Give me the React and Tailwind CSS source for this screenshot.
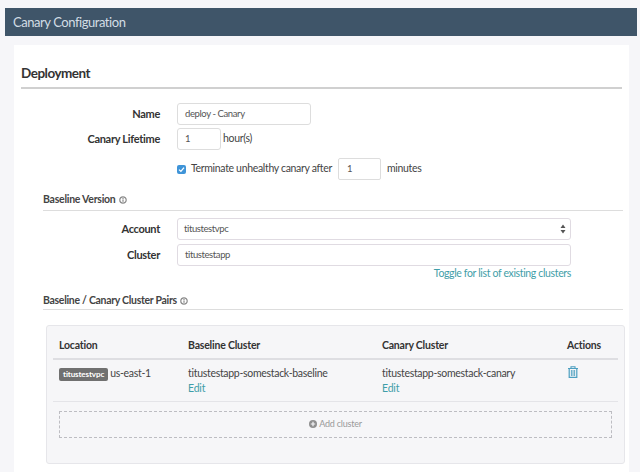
import React from "react";

const font = { fontFamily: '"Lato", "Noto Sans", sans-serif' };

function Label({ children }) {
  return <div className="w-[139px] shrink-0 text-right text-[11px] font-bold tracking-[-0.3px] text-[#333]">{children}</div>;
}

function Info() {
  return (
    <svg width="8" height="8" viewBox="0 0 8 8" className="ml-[3px] inline-block">
      <circle cx="4" cy="4" r="3.2" fill="none" stroke="#8a8a8a" strokeWidth="1.2" />
      <rect x="3.4" y="3.4" width="1.2" height="2.4" fill="#8a8a8a" />
      <rect x="3.4" y="2" width="1.2" height="1" fill="#8a8a8a" />
    </svg>
  );
}

function Edit() {
  return <div className="text-[10.5px] leading-[14px] tracking-[-0.2px] text-[#3f9ea8]">Edit</div>;
}

export default function App() {
  return (
    <div className="h-[475px] w-[640px] overflow-hidden bg-white" style={font}>
      <div className="h-[472px] bg-[#f6f6f9] pt-[8px]">
        <div className="ml-[5px] flex h-[28px] w-[632px] items-center bg-[#3f5569] pl-[8px] pt-[1px] text-[13px] tracking-[-0.45px] text-[#d3dde5]">
          Canary Configuration
        </div>
        <div className="ml-[14px] mt-[9px] h-[427px] w-[615px] bg-white pl-[7px] pt-[20px]">
          <div className="w-[601px] border-b-2 border-[#d0d0d0] pb-[5px] text-[13.5px] font-bold leading-[17px] tracking-[-0.5px] text-[#333]">
            Deployment
          </div>

          <div className="mt-[14px] flex items-center">
            <Label>Name</Label>
            <div className="ml-[17px] flex h-[22px] w-[134px] items-center rounded-[3px] border border-[#ddd] pl-[7px] text-[9.5px] tracking-[-0.4px] text-[#555]">
              deploy - Canary
            </div>
          </div>
          <div className="mt-[3px] flex items-center">
            <Label>Canary Lifetime</Label>
            <div className="ml-[17px] flex h-[22px] w-[44px] items-center rounded-[3px] border border-[#ddd] pl-[7px] text-[9.5px] text-[#555]">
              1
            </div>
            <span className="ml-[2px] text-[10.5px] tracking-[-0.3px] text-[#444]">hour(s)</span>
          </div>

          <div className="ml-[156px] mt-[8px] flex items-center">
            <div className="flex h-[9px] w-[9px] items-center justify-center rounded-[2px] bg-[#3f94d8]">
              <svg width="7" height="7" viewBox="0 0 7 7">
                <path d="M1 3.6 L2.9 5.4 L6 1.6" fill="none" stroke="#fff" strokeWidth="1.3" />
              </svg>
            </div>
            <span className="ml-[5px] text-[10.5px] tracking-[-0.33px] text-[#444]">Terminate unhealthy canary after</span>
            <div className="ml-[6px] flex h-[22px] w-[43px] items-center rounded-[2px] border border-[#ddd] pl-[8px] text-[9.5px] text-[#555]">
              1
            </div>
            <span className="ml-[6px] text-[10.5px] tracking-[-0.3px] text-[#444]">minutes</span>
          </div>

          <div className="ml-[22px] mt-[13px] flex h-[18px] w-[580px] items-center border-b border-[#ddd] pb-[3px] text-[10.5px] font-bold tracking-[-0.25px] text-[#444]">
            Baseline Version
            <Info />
          </div>

          <div className="mt-[7px] flex items-center">
            <Label>Account</Label>
            <div className="ml-[17px] flex h-[22px] w-[394px] items-center justify-between rounded-[3px] border border-[#e0dbe2] pl-[6px] pr-[4px] text-[9.5px] tracking-[-0.4px] text-[#555]">
              titustestvpc
              <svg width="6" height="10" viewBox="0 0 6 10">
                <path d="M3 0.5 L5.5 4 L0.5 4 Z M3 9.5 L5.5 6 L0.5 6 Z" fill="#555" />
              </svg>
            </div>
          </div>
          <div className="mt-[4px] flex items-center">
            <Label>Cluster</Label>
            <div className="ml-[17px] flex h-[22px] w-[394px] items-center rounded-[3px] border border-[#e0dbe2] pl-[7px] text-[9.5px] tracking-[-0.4px] text-[#555]">
              titustestapp
            </div>
          </div>
          <div className="w-[550px] text-right text-[10.5px] leading-[14px] tracking-[-0.35px] text-[#3f9ea8]">
            Toggle for list of existing clusters
          </div>

          <div className="ml-[22px] mt-[13px] flex h-[17px] w-[580px] items-center border-b border-[#ddd] pb-[1px] text-[10.5px] font-bold tracking-[-0.3px] text-[#444]">
            Baseline / Canary Cluster Pairs
            <Info />
          </div>

          <div className="ml-[25px] mt-[15px] h-[139px] w-[579px] rounded-[3px] border border-[#e6e6ea] bg-[#f6f6f8] px-[6px] pt-[12px]">
            <div className="flex h-[22px] border-b-2 border-[#dedee2] text-[10.5px] font-bold leading-[14px] tracking-[-0.2px] text-[#333]">
              <div className="w-[135px] pl-[6px]">Location</div>
              <div className="w-[194px]">Baseline Cluster</div>
              <div className="w-[185px]">Canary Cluster</div>
              <div>Actions</div>
            </div>
            <div className="flex h-[42px] border-b border-[#e4e4e8] pt-[6px] text-[10.5px] leading-[15px] tracking-[-0.3px] text-[#444]">
              <div className="flex w-[135px] items-start pl-[6px]">
                <span className="mt-[2px] flex h-[13px] items-center rounded-[2px] bg-[#707070] px-[4px] text-[8px] font-bold tracking-[-0.1px] text-white">
                  titustestvpc
                </span>
                <span className="ml-[2px]">us-east-1</span>
              </div>
              <div className="w-[194px]">
                titustestapp-somestack-baseline
                <Edit />
              </div>
              <div className="w-[185px]">
                titustestapp-somestack-canary
                <Edit />
              </div>
              <svg width="10" height="12" viewBox="0 0 10 12" className="ml-[1px]" fill="none" stroke="#4d9fc0">
                <path d="M0 2.5 H10 M3 2.5 V0.8 H7 V2.5" strokeWidth="1.1" />
                <path d="M1.2 2.5 V11.3 H8.8 V2.5" strokeWidth="1.2" />
                <path d="M3.4 4 V10 M5 4 V10 M6.6 4 V10" strokeWidth="0.9" />
              </svg>
            </div>
            <div className="mx-[6px] mt-[9px] flex h-[27px] items-center justify-center border border-dashed border-[#bdbdc2] pb-[1px] text-[9px] tracking-[-0.2px] text-[#9a9a9a]">
              <svg width="8" height="8" viewBox="0 0 8 8" className="mr-[2px]">
                <circle cx="4" cy="4" r="4" fill="#8f8f8f" />
                <path d="M4 1.8 V6.2 M1.8 4 H6.2" stroke="#f6f6f8" strokeWidth="1.2" />
              </svg>
              Add cluster
            </div>
          </div>
        </div>
      </div>
    </div>
  );
}
